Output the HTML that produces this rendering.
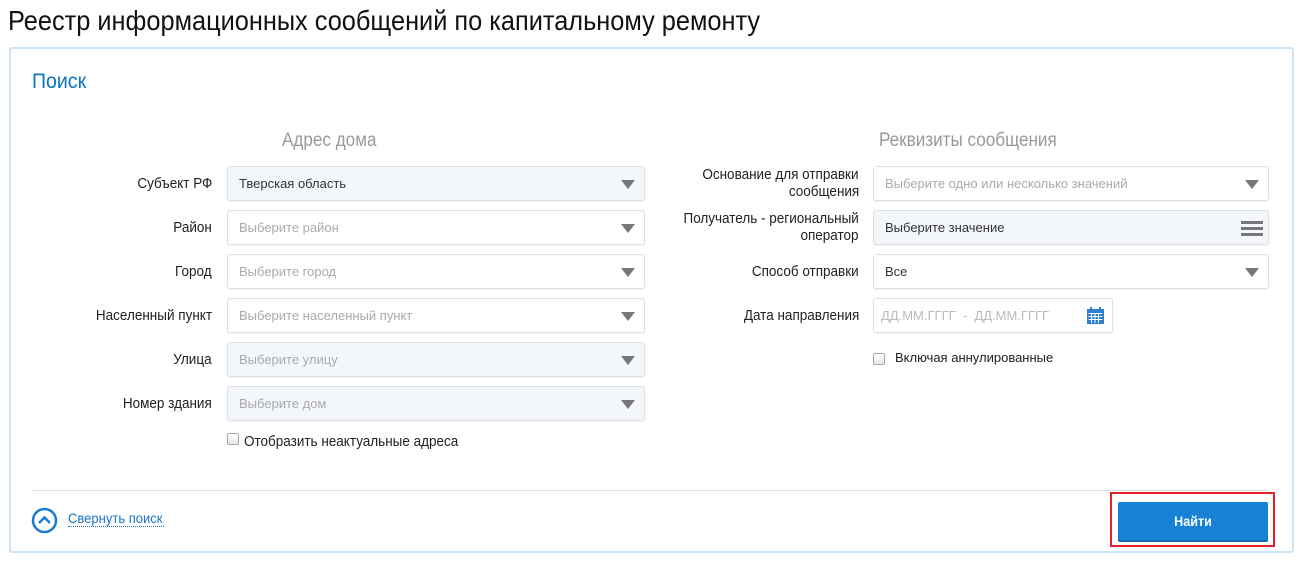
<!DOCTYPE html>
<html><head><meta charset="utf-8"><style>
*{box-sizing:border-box;margin:0;padding:0}
body{width:1307px;height:562px;background:#fff;font-family:"Liberation Sans",sans-serif;position:relative;overflow:hidden;color:#222}
.a{position:absolute}
.n{display:inline-block;transform:scaleX(.9);transform-origin:left center;white-space:nowrap}
.nr{display:inline-block;transform:scaleX(.9);transform-origin:right center;white-space:nowrap}
h1{position:absolute;left:8px;top:5px;font-size:28px;font-weight:normal;color:#111;white-space:nowrap;transform:scaleX(.905);transform-origin:left center}
.panel{left:9px;top:47px;width:1285px;height:506px;border:2px solid #cfe3f6;border-radius:3px}
.lbl{font-size:15px;text-align:right;color:#222;line-height:17px}
.inp{height:35px;border:1px solid #dcdfe3;border-radius:3px;background:#fff;font-size:13px;color:#aaa;padding-left:11px;line-height:33px;box-shadow:0 1px 1px rgba(0,0,0,.04)}
.inp.g{background:#f3f6fa}
.inp.d{color:#333}
.tri{position:absolute;right:9px;top:13px;width:0;height:0;border-left:7px solid transparent;border-right:7px solid transparent;border-top:9px solid #777}
.hd{font-size:19px;color:#999}
.cb{width:12px;height:12px;border:1px solid #aaa;border-radius:2px;background:linear-gradient(#fff,#e6e6e6)}
</style></head><body>
<h1>Реестр информационных сообщений по капитальному ремонту</h1>
<div class="a panel"></div>
<div class="a" style="left:32px;top:70px;font-size:21px;color:#0d74c4"><span class="n" style="transform:scaleX(.93)">Поиск</span></div>
<div class="a hd" style="left:282px;top:130px"><span class="n">Адрес дома</span></div>
<div class="a hd" style="left:879px;top:130px"><span class="n">Реквизиты сообщения</span></div>

<div class="a lbl" style="left:0;width:212px;top:175px"><span class="nr">Субъект РФ</span></div>
<div class="a inp g d" style="left:227px;top:166px;width:418px">Тверская область<div class="tri"></div></div>
<div class="a lbl" style="left:0;width:212px;top:219px"><span class="nr">Район</span></div>
<div class="a inp" style="left:227px;top:210px;width:418px">Выберите район<div class="tri"></div></div>
<div class="a lbl" style="left:0;width:212px;top:263px"><span class="nr">Город</span></div>
<div class="a inp" style="left:227px;top:254px;width:418px">Выберите город<div class="tri"></div></div>
<div class="a lbl" style="left:0;width:212px;top:307px"><span class="nr">Населенный пункт</span></div>
<div class="a inp" style="left:227px;top:298px;width:418px">Выберите населенный пункт<div class="tri"></div></div>
<div class="a lbl" style="left:0;width:212px;top:351px"><span class="nr">Улица</span></div>
<div class="a inp g" style="left:227px;top:342px;width:418px">Выберите улицу<div class="tri"></div></div>
<div class="a lbl" style="left:0;width:212px;top:395px"><span class="nr">Номер здания</span></div>
<div class="a inp g" style="left:227px;top:386px;width:418px">Выберите дом<div class="tri"></div></div>
<div class="a cb" style="left:227px;top:433px"></div>
<div class="a" style="left:244px;top:433px;font-size:15px"><span class="n">Отобразить неактуальные адреса</span></div>

<div class="a lbl" style="left:600px;width:259px;top:166px"><span class="nr">Основание для отправки</span><br><span class="nr">сообщения</span></div>
<div class="a inp" style="left:873px;top:166px;width:396px">Выберите одно или несколько значений<div class="tri"></div></div>
<div class="a lbl" style="left:600px;width:259px;top:210px"><span class="nr">Получатель - региональный</span><br><span class="nr">оператор</span></div>
<div class="a inp g d" style="left:873px;top:210px;width:396px">Выберите значение
<div class="a" style="right:5px;top:10px;width:22px;height:15px;border-top:3px solid #777;border-bottom:3px solid #777"><div style="margin-top:3px;height:3px;background:#777"></div></div></div>
<div class="a lbl" style="left:600px;width:259px;top:263px"><span class="nr">Способ отправки</span></div>
<div class="a inp d" style="left:873px;top:254px;width:396px">Все<div class="tri"></div></div>
<div class="a lbl" style="left:600px;width:259px;top:307px"><span class="nr">Дата направления</span></div>
<div class="a inp" style="left:873px;top:298px;width:240px;padding-left:7px;color:#bbb">ДД.ММ.ГГГГ &nbsp;- &nbsp;ДД.ММ.ГГГГ
<svg class="a" style="left:213px;top:8px" width="17" height="17" viewBox="0 0 17 17"><rect x="0" y="2" width="17" height="15" fill="#2a7fd0"/><rect x="3" y="0" width="2" height="4" fill="#2a7fd0"/><rect x="12" y="0" width="2" height="4" fill="#2a7fd0"/><g fill="#fff"><rect x="1.5" y="6" width="14" height="1"/><rect x="1.5" y="9" width="14" height="1"/><rect x="1.5" y="12" width="14" height="1"/><rect x="4" y="6" width="1" height="10"/><rect x="7.5" y="6" width="1" height="10"/><rect x="11" y="6" width="1" height="10"/></g></svg></div>
<div class="a cb" style="left:873px;top:353px"></div>
<div class="a" style="left:895px;top:350px;font-size:13px">Включая аннулированные</div>

<div class="a" style="left:31px;top:490px;width:1238px;height:1px;background:#e2e2e2"></div>
<svg class="a" style="left:31px;top:507px" width="27" height="27" viewBox="0 0 27 27"><circle cx="13.5" cy="13.5" r="11.5" fill="none" stroke="#1a7bd0" stroke-width="2.5"/><path d="M8 16 L13.5 10.5 L19 16" fill="none" stroke="#1a7bd0" stroke-width="2.5"/></svg>
<div class="a" style="left:68px;top:510px;font-size:14px;color:#1a73c4;line-height:16px;width:96px;border-bottom:1px dotted #1a73c4"><span class="n" style="transform:scaleX(.93)">Свернуть поиск</span></div>
<div class="a" style="left:1110px;top:492px;width:165px;height:55px;border:2px solid #e5202a"></div>
<div class="a" style="left:1118px;top:502px;width:150px;height:38px;background:#1781d8;border-radius:2px;box-shadow:0 2px 0 #1469b0;color:#fff;font-size:14px;font-weight:bold;text-align:center;line-height:38px"><span class="n" style="transform-origin:center">Найти</span></div>
</body></html>
